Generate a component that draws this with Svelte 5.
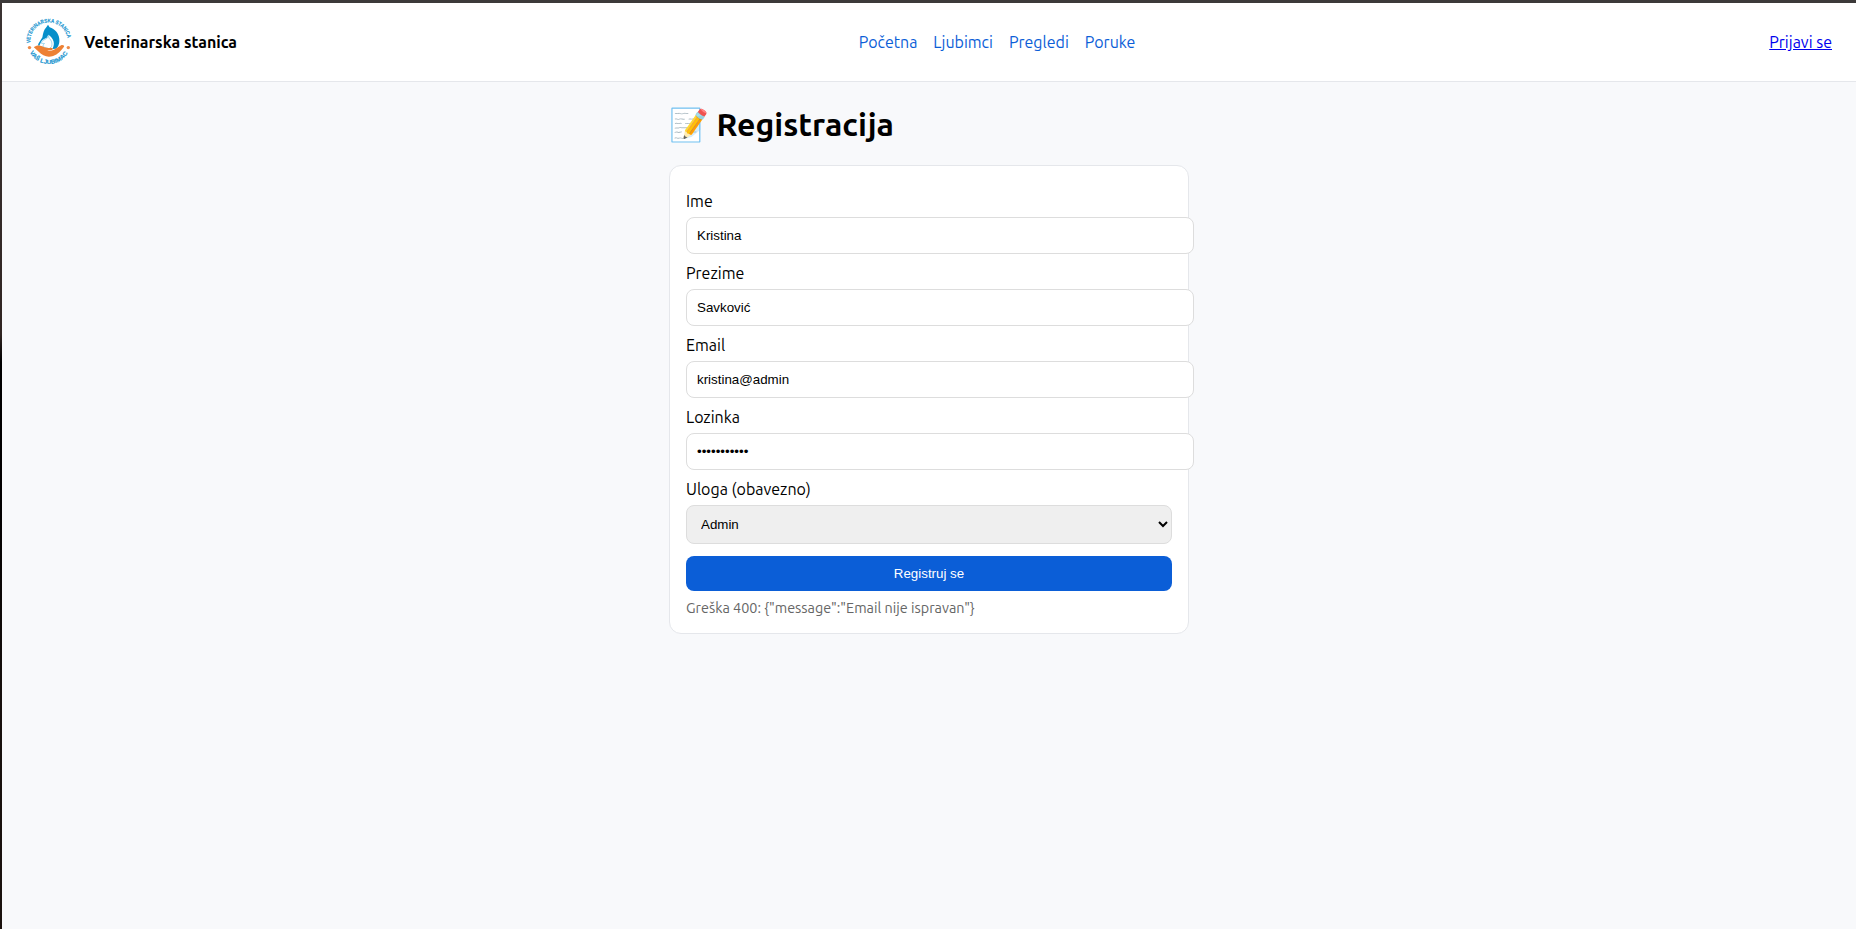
<script>
  const links = ['Početna', 'Ljubimci', 'Pregledi', 'Poruke'];
  const fields = [
    { id: 'ime', label: 'Ime', type: 'text', value: 'Kristina' },
    { id: 'prezime', label: 'Prezime', type: 'text', value: 'Savković' },
    { id: 'email', label: 'Email', type: 'text', value: 'kristina@admin' },
    { id: 'lozinka', label: 'Lozinka', type: 'password', value: 'lozinka1234' }
  ];
</script>

<div class="frame">
  <div class="page">
    <header>
      <div class="brand">
        <svg class="logo" viewBox="0 0 46 46" width="46" height="46" aria-hidden="true">
          <defs>
            <path id="arc-top" d="M4.5 24 A18.6 18.6 0 1 1 41.5 24" />
            <path id="arc-bottom" d="M3.2 32 A21.6 21.6 0 0 0 42.8 32" />
          </defs>
          <g fill="#1493cf" font-family="Liberation Sans, sans-serif" font-weight="700" stroke="#1493cf" stroke-width=".15">
            <text font-size="5.5"><textPath href="#arc-top" textLength="57" lengthAdjust="spacingAndGlyphs">VETERINARSKA STANICA</textPath></text>
            <text font-size="5.8"><textPath href="#arc-bottom" startOffset="1.5" textLength="46" lengthAdjust="spacingAndGlyphs">VAŠ LJUBIMAC</textPath></text>
          </g>
          <path fill="#078fca" d="M18.6 10.4 20.5 8.1 22 5.8 23.6 8.3C29 9.9 32.6 14.4 33.2 19.2c.7 4.8-.7 8.6-3.4 10.6l-3.4.2c1.8-3.7 2-6.8.4-9.6-1.2-2-2.6-3.4-4.4-4.7l-1.7 3.1c-2.2 1.1-4.3 2-5.3 3.4l-2.2 4.7c-1.2-.3-1.3-1.4-.7-2.5l3.9-6.1c.5-2.8.8-5.3 2.2-7.9Z" />
          <path fill="#fff" stroke="#6abfe2" stroke-width=".6" d="m22.4 16.4.6 2.8c2.6 1.9 3.6 5.1 2.6 8.4l-2.4 2.1-6.1-1.8c-.3-1.5.4-2.6 1.4-3.4l-3.1-.2c.2-1.4.8-2.4 2-3l4-2.3Z" />
          <path fill="#ed8134" d="M7.8 28.3c2.4-2 5.2-2.2 8.3-1 3.2 1.3 4.4 2.2 9 1.5 2 .2 2.5 1.7.5 2.3l-4.4.7c2.6.5 5 .1 7.1-1.2l6.8-4.4c1.6-.6 3.6.2 2.9 1.5-2.7 3.8-6.2 7.6-10.9 9.3-6 1.9-10.5-.4-14.4-4.2-1.3-1.4-2.9-2.6-4.9-4.5Z" />
          <circle cx="3.5" cy="28.6" r="1.7" fill="#ed8a48" />
          <circle cx="42.3" cy="28.6" r="1.7" fill="#ed8a48" />
        </svg>
        <strong>Veterinarska stanica</strong>
      </div>
      <nav>
        {#each links as link}
          <a href="#top">{link}</a>
        {/each}
      </nav>
      <a class="login" href="#top">Prijavi se</a>
    </header>

    <main>
      <h1>📝 Registracija</h1>
      <form class="card" onsubmit={(e) => e.preventDefault()}>
        {#each fields as field}
          <label for={field.id}>{field.label}</label>
          <input id={field.id} type={field.type} value={field.value} />
        {/each}
        <label for="uloga">Uloga (obavezno)</label>
        <select id="uloga"><option>Admin</option></select>
        <button>Registruj se</button>
        <p>{'Greška 400: {"message":"Email nije ispravan"}'}</p>
      </form>
    </main>
  </div>
</div>

<style>
  :global(body) { margin: 0; }
  .frame {
    box-sizing: border-box;
    height: 100vh;
    padding: 3px 0 0 2px;
    background:
      linear-gradient(#3c3a3a, #3c3a3a) top / 100% 3px no-repeat,
      linear-gradient(#3b3433, #302522 36%, #000 39%, #020000 54%, #17100d 75%, #1b120e);
    font-family: Ubuntu, "Noto Sans", sans-serif;
    font-size: 16px;
    color: #000;
  }
  .page { height: 100%; background: #f8f9fb; }
  header {
    box-sizing: border-box;
    display: flex;
    align-items: center;
    justify-content: space-between;
    height: 79px;
    padding: 0 24px;
    background: #fff;
    border-bottom: 1px solid #e5e7eb;
    white-space: nowrap;
  }
  .brand { display: flex; align-items: center; gap: 12px; }
  .logo { display: block; overflow: visible; }
  strong { font-weight: 700; }
  nav { display: flex; gap: 16px; margin-right: 12px; }
  nav a { color: #0b5ed7; text-decoration: none; }
  .login { color: #0000ee; }
  main { width: 520px; margin: 0 auto; padding-top: 22px; }
  h1 {
    height: 40px;
    margin: 0 0 21px;
    font-size: 32px;
    font-weight: 700;
    line-height: 40px;
    white-space: nowrap;
  }
  .card {
    box-sizing: border-box;
    height: 469px;
    padding: 15px 16px;
    background: #fff;
    border: 1px solid #e5e7eb;
    border-radius: 12px;
  }
  label {
    display: block;
    height: 18px;
    margin: 10px 0 7px;
    line-height: 18px;
    white-space: nowrap;
  }
  label:first-child { margin-top: 11px; }
  input, select, button {
    display: block;
    width: 100%;
    padding: 10px;
    border: 1px solid #ddd;
    border-radius: 8px;
    font: 13.333px "Liberation Sans", Arial, sans-serif;
  }
  input { height: 15px; background: #fff; color: #000; }
  select { height: 39px; background-color: #efefef; color: #000; }
  button {
    height: 35px;
    margin-top: 12px;
    border: 0;
    background: #0b5ed7;
    color: #fff;
  }
  p {
    height: 18px;
    margin: 8px 0 0;
    color: #666;
    font-size: 14.4px;
    line-height: 18px;
    white-space: nowrap;
  }
</style>
